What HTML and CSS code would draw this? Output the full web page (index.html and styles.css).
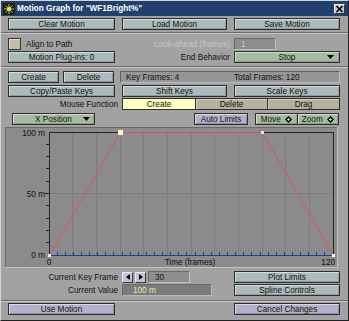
FILE: index.html
```html
<!DOCTYPE html>
<html>
<head>
<meta charset="utf-8">
<link rel="stylesheet" href="styles.css">
</head>
<body>
<div class="win">
  <div class="title">
    <svg class="ico" width="12" height="12" viewBox="0 0 12 12">
      <rect width="12" height="12" fill="#1c2410"/>
      <path d="M6 1v10M1 6h10M2.5 2.5l7 7M9.5 2.5l-7 7" stroke="#c8c040" stroke-width="1"/>
      <circle cx="6" cy="6" r="2" fill="#e8e070"/>
    </svg>
    <span class="ttext">Motion Graph for "WF1Bright%"</span>
    <span class="close"><svg width="9" height="8" viewBox="0 0 9 8"><path d="M1.5 1l6 6M7.5 1l-6 6" stroke="#000" stroke-width="1.6"/></svg></span>
  </div>

  <div class="row r-a">
    <div class="btn">Clear Motion</div>
    <div class="btn">Load Motion</div>
    <div class="btn">Save Motion</div>
  </div>
  <div class="sep s1"></div>

  <div class="row r-b">
    <div class="check"><span class="box"></span>Align to Path</div>
    <div class="lbl dis">Look-ahead (frames)</div>
    <div class="cell"><div class="field look">1</div></div>
  </div>
  <div class="row r-c">
    <div class="btn">Motion Plug-ins: 0</div>
    <div class="lbl">End Behavior</div>
    <div class="btn green drop"><span class="dt">Stop</span><svg class="tri" width="7" height="4" viewBox="0 0 7 4"><path d="M0 0h7l-3.5 4z" fill="#000"/></svg></div>
  </div>
  <div class="sep s2"></div>

  <div class="row r-d">
    <div class="pair"><div class="btn">Create</div><div class="btn">Delete</div></div>
    <div class="info"><span class="kf">Key Frames: 4</span><span class="tf">Total Frames: 120</span></div>
  </div>
  <div class="row r-e">
    <div class="btn">Copy/Paste Keys</div>
    <div class="btn">Shift Keys</div>
    <div class="btn">Scale Keys</div>
  </div>
  <div class="row r-f">
    <div class="lbl">Mouse Function</div>
    <div class="seg"><div class="sg yel">Create</div><div class="sg tan">Delete</div><div class="sg tan">Drag</div></div>
  </div>
  <div class="row-g">
    <div class="btn green drop xpos"><span class="dt">X Position</span><svg class="tri" width="7" height="4" viewBox="0 0 7 4"><path d="M0 0h7l-3.5 4z" fill="#000"/></svg></div>
    <div class="btn purple auto">Auto Limits</div>
    <div class="mz">
      <div class="mzb">Move<svg class="dia" width="7" height="7" viewBox="0 0 7 7"><path d="M3.5 0L7 3.5 3.5 7 0 3.5z" fill="#000"/><path d="M3.5 2L5 3.5 3.5 5 2 3.5z" fill="#e8f0e0"/></svg></div>
      <div class="mzb">Zoom<svg class="dia" width="7" height="7" viewBox="0 0 7 7"><path d="M3.5 0L7 3.5 3.5 7 0 3.5z" fill="#000"/><path d="M3.5 2L5 3.5 3.5 5 2 3.5z" fill="#e8f0e0"/></svg></div>
    </div>
  </div>

  <div class="graph">
    <svg width="333" height="141" viewBox="5 127 333 141" shape-rendering="crispEdges">
      <rect x="5" y="127" width="333" height="141" fill="#8b8b8b"/>
      <path d="M5 127.5h333M5.5 127v141" stroke="#6a6a6a"/>
      <path d="M5 267.5h333M337.5 127v141" stroke="#c2c2c2"/>
      <path d="M72.5 132v123M96.5 132v123M120.5 132v123M143.5 132v123M167.5 132v123M191.5 132v123M214.5 132v123M238.5 132v123M262.5 132v123M285.5 132v123M309.5 132v123M49 193.5h284" stroke="#7d7d7d"/>
      <path d="M49 132.5h284.5M333.5 132v123M49.5 132v123M46 242.5h3M46 230.5h3M46 218.5h3M46 205.5h3M45 193.5h4M46 181.5h3M46 168.5h3M46 156.5h3M46 144.5h3" stroke="#262626"/>
      <path d="M49 255.5h285M57.5 252v3M65.5 252v3M73.5 252v3M81.5 252v3M89.5 252v3M97.5 252v3M105.5 252v3M113.5 252v3M122.5 252v3M130.5 252v3M138.5 252v3M146.5 252v3M154.5 252v3M162.5 252v3M170.5 252v3M178.5 252v3M186.5 252v3M195.5 252v3M203.5 252v3M211.5 252v3M219.5 252v3M227.5 252v3M235.5 252v3M243.5 252v3M251.5 252v3M260.5 252v3M268.5 252v3M276.5 252v3M284.5 252v3M292.5 252v3M300.5 252v3M308.5 252v3M316.5 252v3M324.5 252v3" stroke="#1c3c9c"/>
      <polyline points="49.5,255.5 120.5,132.5 262.5,132.5 333.5,255.5" fill="none" stroke="#e05068" shape-rendering="auto"/>
      <rect x="118" y="130" width="5" height="5" fill="#fbfbc4"/>
      <rect x="261" y="131" width="3" height="3" fill="#e8e8e8"/>
      <rect x="48" y="254" width="3" height="3" fill="#f0f0f0"/>
      <rect x="332" y="254" width="3" height="3" fill="#f0f0f0"/>
      <g class="gtxt">
        <text x="45" y="135.5" text-anchor="end">100 m</text>
        <text x="45" y="196.5" text-anchor="end">50 m</text>
        <text x="45" y="258" text-anchor="end">0 m</text>
        <text x="49" y="265" text-anchor="middle">0</text>
        <text x="190" y="265" text-anchor="middle">Time (frames)</text>
        <text x="335" y="265" text-anchor="end">120</text>
      </g>
    </svg>
  </div>

  <div class="row r-h">
    <div class="lbl">Current Key Frame</div>
    <div class="kfrow">
      <span class="arr"><svg width="4" height="6" viewBox="0 0 4 6"><path d="M4 0v6L0 3z" fill="#000"/></svg></span>
      <span class="arr"><svg width="4" height="6" viewBox="0 0 4 6"><path d="M0 0v6l4-3z" fill="#000"/></svg></span>
      <div class="field kfv">30</div>
    </div>
    <div class="btn">Plot Limits</div>
  </div>
  <div class="row r-i">
    <div class="lbl">Current Value</div>
    <div class="cell"><div class="field cv">100 m</div></div>
    <div class="btn">Spline Controls</div>
  </div>
  <div class="sep s3"></div>
  <div class="row r-j">
    <div class="btn purple">Use Motion</div>
    <div></div>
    <div class="btn purple">Cancel Changes</div>
  </div>
</div>
</body>
</html>
```

FILE: styles.css
```css
* { box-sizing: border-box; margin: 0; padding: 0; }
body {
  margin: 0;
  background: #a2a2a2;
  font-family: "Liberation Sans", Arial, sans-serif;
  font-size: 8.2px;
  color: #111;
}
.win {
  width: 349px;
  height: 321px;
  border: 1px solid;
  border-color: #d6d6d6 #222 #222 #d6d6d6;
  background: #a2a2a2;
  display: flex;
  flex-direction: column;
  overflow: hidden;
}
.title {
  flex: none;
  height: 15px;
  background: #22406e;
  color: #fff;
  font-weight: bold;
  display: flex;
  align-items: center;
  padding-left: 2px;
}
.ico { display: block; margin-right: 2px; }
.ttext { white-space: nowrap; }
.close {
  margin-left: auto;
  margin-right: 3px;
  width: 11px;
  height: 10px;
  background: #c6c6c6;
  border: 1px solid;
  border-color: #f0f0f0 #303030 #303030 #f0f0f0;
  display: flex;
  align-items: center;
  justify-content: center;
}
.close svg { display: block; }

.row {
  flex: none;
  display: grid;
  grid-template-columns: 107px 105px 106px;
  column-gap: 7px;
  height: 12px;
  padding-left: 7px;
}
.sep {
  flex: none;
  height: 2px;
  border-top: 1px solid #6c6c6c;
  border-bottom: 1px solid #c8c8c8;
}
.r-a { margin-top: 2px; }
.s1 { margin-top: 2px; }
.r-b { margin-top: 4px; }
.r-c { margin-top: 1px; }
.s2 { margin-top: 3px; }
.r-d { margin-top: 3px; }
.r-e { margin-top: 2px; }
.r-f { margin-top: 1px; }
.r-h { margin-top: 3px; }
.r-i { margin-top: 1px; }
.s3 { margin-top: 4px; }
.r-j { margin-top: 1px; }

.btn {
  height: 12px;
  border: 1px solid #2e2e2e;
  background: #abbaba;
  box-shadow: inset 1px 1px 0 #d2dcdc, inset -1px -1px 0 #8e9a9a;
  display: flex;
  align-items: center;
  justify-content: center;
  white-space: nowrap;
  color: #111;
}
.green { background: #a7baa2; box-shadow: inset 1px 1px 0 #d0dccc, inset -1px -1px 0 #8a9a86; }
.purple { background: #b2b2c8; box-shadow: inset 1px 1px 0 #d8d8e8, inset -1px -1px 0 #8e8ea4; }
.drop { position: relative; }
.drop .tri { position: absolute; right: 5px; top: 3px; }

.lbl {
  display: flex;
  align-items: center;
  justify-content: flex-end;
  margin-right: -3px;
  white-space: nowrap;
}
.dis { color: #c6c6c6; }
.check { display: flex; align-items: center; white-space: nowrap; }
.box {
  width: 13px;
  height: 12px;
  border: 1px solid #333;
  background: #c6bea6;
  box-shadow: inset 1px 1px 0 #e4dcc8;
  margin-right: 5px;
}
.cell { display: flex; }
.field {
  height: 12px;
  border: 1px solid;
  border-color: #6a6a6a #c0c0c0 #c0c0c0 #6a6a6a;
  background: #8e8e8e;
  display: flex;
  align-items: center;
}
.look { width: 42px; color: #cacaca; padding-left: 6px; }

.pair { display: grid; grid-template-columns: 51px 51px; column-gap: 4px; }
.info {
  grid-column: 2 / 4;
  margin-left: -2px;
  height: 12px;
  background: #969696;
  border: 1px solid;
  border-color: #5e5e5e #bcbcbc #bcbcbc #5e5e5e;
  display: grid;
  grid-template-columns: 113px 1fr;
  align-items: center;
}
.kf { padding-left: 5px; }
.tf { padding-left: 0; }

.seg {
  grid-column: 2 / 4;
  display: grid;
  grid-template-columns: 72px 72px 1fr;
  border: 1px solid #2e2e2e;
  height: 12px;
}
.sg {
  display: flex;
  align-items: center;
  justify-content: center;
}
.sg + .sg { border-left: 1px solid #2e2e2e; }
.yel { background: #ffffc0; }
.tan { background: #b5b19d; box-shadow: inset 1px 1px 0 #d4d0c0; }

.row-g {
  flex: none;
  margin-top: 3px;
  height: 12px;
  display: flex;
  padding-left: 11px;
}
.xpos { width: 83px; }
.xpos .tri { right: 4px; }
.auto { width: 54px; margin-left: 99px; }
.mz {
  margin-left: 7px;
  width: 84px;
  height: 12px;
  border: 1px solid #2e2e2e;
  display: flex;
  background: #a7baa2;
}
.mzb {
  flex: 1;
  display: flex;
  align-items: center;
  justify-content: center;
  gap: 4px;
  box-shadow: inset 1px 1px 0 #d0dccc, inset -1px -1px 0 #8a9a86;
}
.mzb + .mzb { border-left: 1px solid #2e2e2e; }
.dia { display: block; }

.graph {
  flex: none;
  margin-top: 2px;
  margin-left: 4px;
  width: 333px;
  height: 141px;
}
.graph svg { display: block; }
.gtxt text {
  font-family: "Liberation Sans", Arial, sans-serif;
  font-size: 8.2px;
  fill: #111;
}

.kfrow { display: flex; align-items: center; gap: 2px; }
.arr {
  width: 11px;
  height: 11px;
  background: #c4c4d6;
  border: 1px solid;
  border-color: #e8e8f0 #3a3a3a #3a3a3a #e8e8f0;
  display: flex;
  align-items: center;
  justify-content: center;
}
.arr svg { display: block; }
.kfv { width: 42px; padding-left: 6px; }
.cv {
  width: 90px;
  background: #7b7b7b;
  border-color: #6a6a6a #b8b8b8 #b8b8b8 #6a6a6a;
  color: #eaea9c;
  padding-left: 10px;
}
```
